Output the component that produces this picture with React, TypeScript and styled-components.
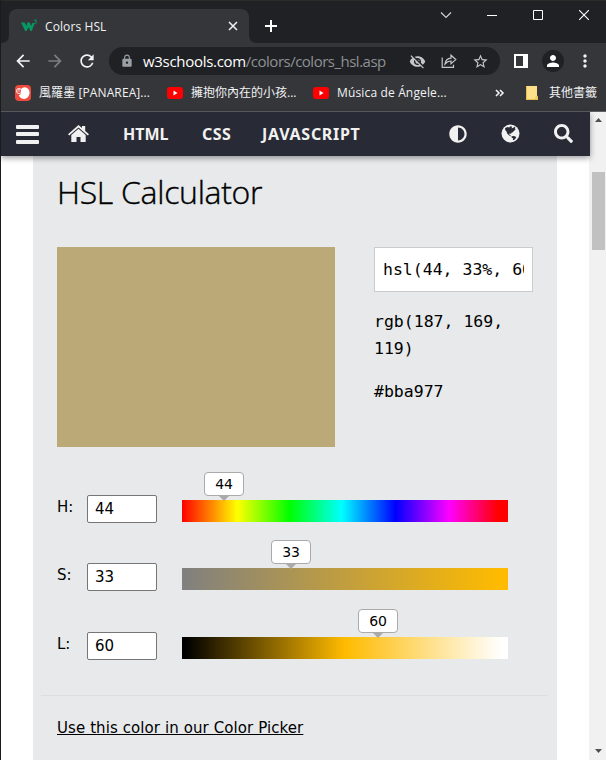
import React from "react";
import styled, { createGlobalStyle } from "styled-components";
import {
  MdArrowBack,
  MdArrowForward,
  MdRefresh,
  MdLock,
  MdVisibilityOff,
  MdStarBorder,
  MdPerson,
  MdMoreVert,
} from "react-icons/md";
import { FaAdjust, FaSearch } from "react-icons/fa";

const GlobalStyle = createGlobalStyle`
  * { box-sizing: border-box; }
  html, body { margin: 0; padding: 0; overflow: hidden; background: #202124; }
`;

const UI = `"Open Sans", "Noto Sans", "Noto Sans CJK TC", sans-serif`;
const BODY = `"DejaVu Sans", Verdana, sans-serif`;
const MONO = `"DejaVu Sans Mono", Consolas, monospace`;

const BrowserWindow = styled.div`
  width: 606px;
  height: 760px;
  display: flex;
  flex-direction: column;
  overflow: hidden;
  background: #35363a;
  border-left: 1px solid #1b1b1b;
  font-family: ${UI};
`;

const TabStrip = styled.div`
  height: 43px;
  flex: none;
  display: flex;
  background: #202124;
  border-top: 1px solid #2b2b29;
`;

const TabFoot = styled.svg`
  width: 8px;
  height: 8px;
  flex: none;
  align-self: flex-end;
`;

const Tab = styled.div`
  width: 240px;
  height: 34px;
  margin-top: 8px;
  padding: 0 10px 0 12px;
  display: flex;
  align-items: center;
  border-radius: 8px 8px 0 0;
  background: #35363a;
`;

const Label = styled.span<{ $size: number; $spacing?: number }>`
  font-size: ${(p) => p.$size}px;
  letter-spacing: ${(p) => p.$spacing ?? 0}px;
  color: #f1f3f4;
  line-height: 20px;
  white-space: nowrap;
`;

const TabTitle = styled(Label)`
  flex: 1;
  margin: 1px 0 0 7px;
`;

const Glyph = styled.svg`
  display: block;
  flex: none;
`;

const NewTab = styled.div`
  display: flex;
  align-items: center;
  padding: 8px 0 0 8px;
`;

const WindowControls = styled.div`
  margin-left: auto;
  width: 183px;
  height: 28px;
  display: grid;
  grid-template-columns: repeat(4, 46px);
  place-items: center;
`;

const Toolbar = styled.div`
  height: 36px;
  flex: none;
  display: flex;
  align-items: center;
  padding-left: 12px;
  color: #f1f3f4;

  svg {
    display: block;
    flex: none;
  }
`;

const NavButtons = styled.div`
  width: 96px;
  display: flex;
  gap: 12px;
`;

const AddressBar = styled.div`
  width: 391px;
  height: 28px;
  padding: 0 11px 0 11px;
  display: flex;
  align-items: center;
  border-radius: 14px;
  background: #202124;
  color: #c4c7ca;
`;

const Address = styled.div`
  flex: 1;
  margin: -1px 0 0 9px;
  font-size: 15px;
  line-height: 24px;
  letter-spacing: -0.5px;
  white-space: nowrap;
  color: #8e9195;

  b {
    font-weight: 400;
    letter-spacing: -0.3px;
    color: #fff;
  }
`;

const AddressActions = styled.div`
  display: flex;
  align-items: center;
  gap: 15px;
`;

const ToolbarEnd = styled.div`
  flex: 1;
  display: flex;
  align-items: center;
  padding-left: 14px;
`;

const Avatar = styled.div`
  width: 22px;
  height: 22px;
  margin: 0 11px 0 14px;
  display: grid;
  place-items: center;
  border-radius: 50%;
  background: #202124;
`;

const Bookmarks = styled.div`
  height: 32px;
  flex: none;
  display: flex;
  align-items: center;
  padding: 0 0 4px 14px;
`;

const Bookmark = styled.div<{ $width: number; $gap: number }>`
  width: ${(p) => p.$width}px;
  flex: none;
  display: flex;
  align-items: center;
  gap: ${(p) => p.$gap}px;
`;

const Divider = styled.div`
  width: 1px;
  height: 16px;
  margin: 0 12px 0 9px;
  background: #5f6063;
`;

const Viewport = styled.div`
  flex: 1;
  min-height: 0;
  display: flex;
  border-top: 1px solid #625e68;
`;

const Page = styled.div`
  width: 588px;
  display: flex;
  flex-direction: column;
  background: #fff;
`;

const SiteNav = styled.nav`
  position: relative;
  width: 589px;
  height: 44px;
  flex: none;
  display: flex;
  align-items: center;
  padding: 0 17px 0 15px;
  background: #282a35;
  color: #f1f1f1;
  box-shadow: 0 2px 6px rgba(0, 0, 0, 0.4);

  svg {
    display: block;
    flex: none;
  }
`;

const Burger = styled.div`
  width: 23px;
  height: 19px;
  margin-right: 29px;
  display: flex;
  flex-direction: column;
  justify-content: space-between;

  i {
    height: 4px;
    border-radius: 1px;
    background: #f1f1f1;
  }
`;

const SiteLink = styled.a<{ $width: number; $spacing: number }>`
  width: ${(p) => p.$width}px;
  font: 700 16px/24px "Noto Sans", sans-serif;
  letter-spacing: ${(p) => p.$spacing}px;
  white-space: nowrap;
`;

const SiteLinks = styled.div`
  display: flex;
  margin-left: 34px;
`;

const SiteTools = styled.div`
  margin: -1px 0 0 auto;
  display: flex;
  align-items: center;
  gap: 34px;
`;

const Panel = styled.main`
  width: 524px;
  flex: 1;
  margin-left: 32px;
  padding: 0 24px;
  background: #e7e9eb;
  color: #000;
`;

const Title = styled.h1`
  height: 91px;
  margin: 0;
  padding-top: 12px;
  font: 300 32px/48px "Open Sans", sans-serif;
  letter-spacing: -0.3px;
  -webkit-text-stroke: 0.4px #000;
  white-space: nowrap;
`;

const Summary = styled.section`
  display: flex;
  gap: 39px;
  height: 248px;
`;

const Swatch = styled.div`
  width: 278px;
  height: 200px;
  background: #bba977;
`;

const Codes = styled.div`
  width: 159px;
  font: 16.5px/27px ${MONO};
`;

const CodeField = styled.input`
  display: block;
  width: 159px;
  height: 45px;
  padding: 0 8px;
  margin: 0 0 16px;
  border: 1px solid #ccc;
  border-radius: 0;
  outline: 0;
  background: #fff;
  color: #000;
  font: 16.5px/27px ${MONO};
`;

const Code = styled.p`
  margin: 0 0 16px;
`;

const SliderRow = styled.div<{ $height: number }>`
  height: ${(p) => p.$height}px;
  display: flex;
  align-items: flex-start;
`;

const Channel = styled.label`
  width: 30px;
  padding-top: 3px;
  font: 15px/18px ${BODY};
`;

const NumberField = styled.div`
  width: 70px;
  height: 28px;
  margin-right: 25px;
  padding-left: 7px;
  border: 1px solid #767676;
  border-radius: 2px;
  background: #fff;
  font: 15px/27px ${BODY};
`;

const Track = styled.div<{ $fill: string }>`
  position: relative;
  width: 326px;
  height: 22px;
  margin-top: 5px;
  background: ${(p) => p.$fill};
`;

const Bubble = styled.output<{ $left: number }>`
  position: absolute;
  left: ${(p) => p.$left}px;
  bottom: 26px;
  width: 40px;
  height: 24px;
  border: 1px solid #aaa;
  border-radius: 4px;
  background: #fff;
  font: 14px/22px ${BODY};
  letter-spacing: -0.2px;
  text-align: center;

  &::after {
    content: "";
    position: absolute;
    left: 14px;
    top: 23px;
    border: 5px solid transparent;
    border-top-color: #aaa;
    border-bottom: 0;
  }
`;

const Rule = styled.hr`
  width: 507px;
  height: 1px;
  margin: -5px 0 0 -16px;
  border: 0;
  background: #dcdee0;
`;

const PickerLink = styled.a`
  display: inline-block;
  margin-top: 22px;
  font: 15px/20px ${BODY};
  letter-spacing: 0.09px;
  text-decoration: underline;
  text-decoration-thickness: 1px;
  white-space: nowrap;
`;

const Scrollbar = styled.div`
  flex: 1;
  display: flex;
  flex-direction: column;
  align-items: center;
  padding: 6px 0 7px 1px;
  background: #f1f1f1;
`;

const Thumb = styled.div`
  width: 13px;
  height: 78px;
  margin: 50px 0 auto;
  background: #c1c1c1;
`;

const channels = [
  {
    name: "H:",
    value: 44,
    left: 22,
    height: 68,
    fill: "linear-gradient(90deg, #f00 0%, #ff0 17%, #0f0 33%, #0ff 49%, #00f 65.5%, #f0f 82%, #f00 97%)",
  },
  { name: "S:", value: 33, left: 89, height: 69, fill: "linear-gradient(90deg, #808080, #ffbb00 98%)" },
  { name: "L:", value: 60, left: 176, height: 68, fill: "linear-gradient(90deg, #000 1%, #ffbb00 50%, #fff 98%)" },
];

const W3Logo = () => (
  <Glyph width="17" height="14" viewBox="0 0 17 14" fill="#059862" stroke="#059862">
    <path d="M0 3.5h3.6L5.4 7 6.3 3.5h2.5L10.2 7l1.2-3h2.3L10.8 12H9.6L7.6 8.2 5.4 12H4.2z" stroke="none" />
    <path d="M12.9 1h2.6l-1.4 1.6q1.8.1 1.4 1.5-.6 1.1-2.4.3" fill="none" strokeWidth="0.9" />
  </Glyph>
);

const HomeIcon = () => (
  <Glyph width="21" height="18" viewBox="0 0 21 18" fill="#f1f1f1">
    <path d="M10.5 0 14 3.1V1h3.2v4.9L21 9.3 19.8 10.6 10.5 2.5 1.2 10.6 0 9.3z" />
    <path d="M10.5 3.8 17.7 10v7H12.5v-5h-4v5H3.3v-7z" />
  </Glyph>
);

const GlobeIcon = () => (
  <Glyph width="19" height="19" viewBox="0 0 19 19">
    <circle cx="9.5" cy="9.5" r="9" fill="#f1f1f1" />
    <path
      d="M4 4.2 6.2 3l2 .6 1.2-1.3 1.8.5-.8 1.4 1.8-.3.9-1.2 1.4 1-.8 1.2 1 .9-1.4.8-1.5 1.6-1.1.4-.6 1.2-1.5-.4-.6 1 1.5.7.1 1.3-1.9-1.3-1.4-1.4-.9-2.4-1.1-1zM10.5 12.2l2.5-.3 2.2 1-.6 1.5-1.6 1.6-1.1.2.2-1.7-1.5-1z"
      fill="#282a35"
    />
  </Glyph>
);

const YouTube = () => (
  <Glyph width="16" height="16" viewBox="0 0 16 16">
    <rect y="2" width="16" height="12" rx="3" fill="#f00" />
    <path d="M6.5 5.6v4.8L10.6 8z" fill="#fff" />
  </Glyph>
);

const Panarea = () => (
  <Glyph width="16" height="16" viewBox="0 0 16 16">
    <rect width="16" height="16" rx="4" fill="#ee4a3e" />
    <path d="M6 4Q8 1.8 11 2.4Q15 3.8 14.5 8.5Q13.6 13 9.5 14Q5.2 14 3.7 10Q5.4 10 6 8.4z" fill="#fff" />
    <circle cx="4" cy="6" r="2.6" fill="none" stroke="#fff" strokeWidth="0.8" />
    <path d="M2.2 6h3M3 4.4h2" stroke="#fff" strokeWidth="0.7" />
  </Glyph>
);

export default function App() {
  return (
    <BrowserWindow>
      <GlobalStyle />
      <TabStrip>
        <TabFoot viewBox="0 0 8 8"><path d="M8 0v8H0q8 0 8-8" fill="#35363a" /></TabFoot>
        <Tab>
          <W3Logo />
          <TabTitle $size={12} $spacing={0.1}>Colors HSL</TabTitle>
          <Glyph width="12" height="12" viewBox="0 0 12 12" stroke="#f1f3f4" strokeWidth="1.5">
            <path d="m2 2 8 8m0-8-8 8" />
          </Glyph>
        </Tab>
        <TabFoot viewBox="0 0 8 8"><path d="M0 0v8h8Q0 8 0 0" fill="#35363a" /></TabFoot>
        <NewTab>
          <Glyph width="12" height="12" viewBox="0 0 12 12" stroke="#fff" strokeWidth="2">
            <path d="M6 0v12M0 6h12" />
          </Glyph>
        </NewTab>
        <WindowControls>
          <Glyph width="12" height="12" viewBox="0 0 12 12" fill="none" stroke="#d5d6d8" strokeWidth="1.1">
            <path d="m1 3.5 5 5 5-5" />
          </Glyph>
          <Glyph width="10" height="10" viewBox="0 0 10 10" stroke="#fff"><path d="M0 5.5h10" /></Glyph>
          <Glyph width="10" height="10" viewBox="0 0 10 10" fill="none" stroke="#fff"><path d="M.5.5h9v9h-9z" /></Glyph>
          <Glyph width="10" height="10" viewBox="0 0 10 10" stroke="#fff" strokeWidth="1.1"><path d="m0 0 10 10M10 0 0 10" /></Glyph>
        </WindowControls>
      </TabStrip>

      <Toolbar>
        <NavButtons>
          <MdArrowBack size={20} />
          <MdArrowForward size={20} color="#7d7e81" />
          <MdRefresh size={20} />
        </NavButtons>
        <AddressBar>
          <MdLock size={14} color="#9aa0a6" />
          <Address><b>w3schools.com</b>/colors/colors_hsl.asp</Address>
          <AddressActions>
            <MdVisibilityOff size={17} />
            <Glyph width="16" height="16" viewBox="0 0 16 16" fill="none" stroke="currentColor" strokeWidth="1.2">
              <path d="M1.2 4.5v9.8h11.3v-2.6M4 11Q4.8 5.7 10 5.2V2.2L14.8 6.6 10 10.8V8Q6.5 8 4 11z" />
            </Glyph>
            <MdStarBorder size={17} />
          </AddressActions>
        </AddressBar>
        <ToolbarEnd>
          <Glyph width="14" height="14" viewBox="0 0 14 14" fill="none" stroke="#fff" strokeWidth="2">
            <path d="M1 1h12v12H1z" />
            <path d="M10 1h3v12h-3z" fill="#fff" />
          </Glyph>
          <Avatar><MdPerson size={18} color="#fff" /></Avatar>
          <MdMoreVert size={20} />
        </ToolbarEnd>
      </Toolbar>

      <Bookmarks>
        <Bookmark $width={152} $gap={8}>
          <Panarea />
          <Label $size={12} $spacing={0.1}>風羅墨 [PANAREA]...</Label>
        </Bookmark>
        <Bookmark $width={146} $gap={8}>
          <YouTube />
          <Label $size={12}>擁抱你內在的小孩...</Label>
        </Bookmark>
        <Bookmark $width={182} $gap={8}>
          <YouTube />
          <Label $size={12} $spacing={0.15}>Música de Ángele...</Label>
        </Bookmark>
        <Glyph width="10" height="8" viewBox="0 0 10 8" fill="none" stroke="#f1f3f4" strokeWidth="1.6">
          <path d="m1 1 3 3-3 3M5 1l3 3-3 3" />
        </Glyph>
        <Divider />
        <Bookmark $width={80} $gap={11}>
          <Glyph width="12" height="14" viewBox="0 0 12 14">
            <path d="M0 0h11v10h1v4H0z" fill="#ffe08a" />
            <path d="M.5.5v13h9l1-3.5h1v3.5H9.5" fill="none" stroke="#eabf50" />
          </Glyph>
          <Label $size={12}>其他書籤</Label>
        </Bookmark>
      </Bookmarks>

      <Viewport>
        <Page>
          <SiteNav>
            <Burger><i /><i /><i /></Burger>
            <HomeIcon />
            <SiteLinks>
              <SiteLink $width={79} $spacing={0}>HTML</SiteLink>
              <SiteLink $width={60} $spacing={0.4}>CSS</SiteLink>
              <SiteLink $width={110} $spacing={0.7}>JAVASCRIPT</SiteLink>
            </SiteLinks>
            <SiteTools>
              <FaAdjust size={18} />
              <GlobeIcon />
              <FaSearch size={19} />
            </SiteTools>
          </SiteNav>
          <Panel>
            <Title>HSL Calculator</Title>
            <Summary>
              <Swatch />
              <Codes>
                <CodeField readOnly defaultValue="hsl(44, 33%, 60%)" />
                <Code>rgb(187, 169, 119)</Code>
                <Code>#bba977</Code>
              </Codes>
            </Summary>
            {channels.map((c) => (
              <SliderRow key={c.name} $height={c.height}>
                <Channel>{c.name}</Channel>
                <NumberField>{c.value}</NumberField>
                <Track $fill={c.fill}>
                  <Bubble $left={c.left}>{c.value}</Bubble>
                </Track>
              </SliderRow>
            ))}
            <Rule />
            <PickerLink>Use this color in our Color Picker</PickerLink>
          </Panel>
        </Page>
        <Scrollbar>
          <Glyph width="7" height="4" viewBox="0 0 7 4"><path d="M0 4 3.5 0 7 4z" fill="#505050" /></Glyph>
          <Thumb />
          <Glyph width="7" height="4" viewBox="0 0 7 4"><path d="M0 0h7L3.5 4z" fill="#505050" /></Glyph>
        </Scrollbar>
      </Viewport>
    </BrowserWindow>
  );
}
